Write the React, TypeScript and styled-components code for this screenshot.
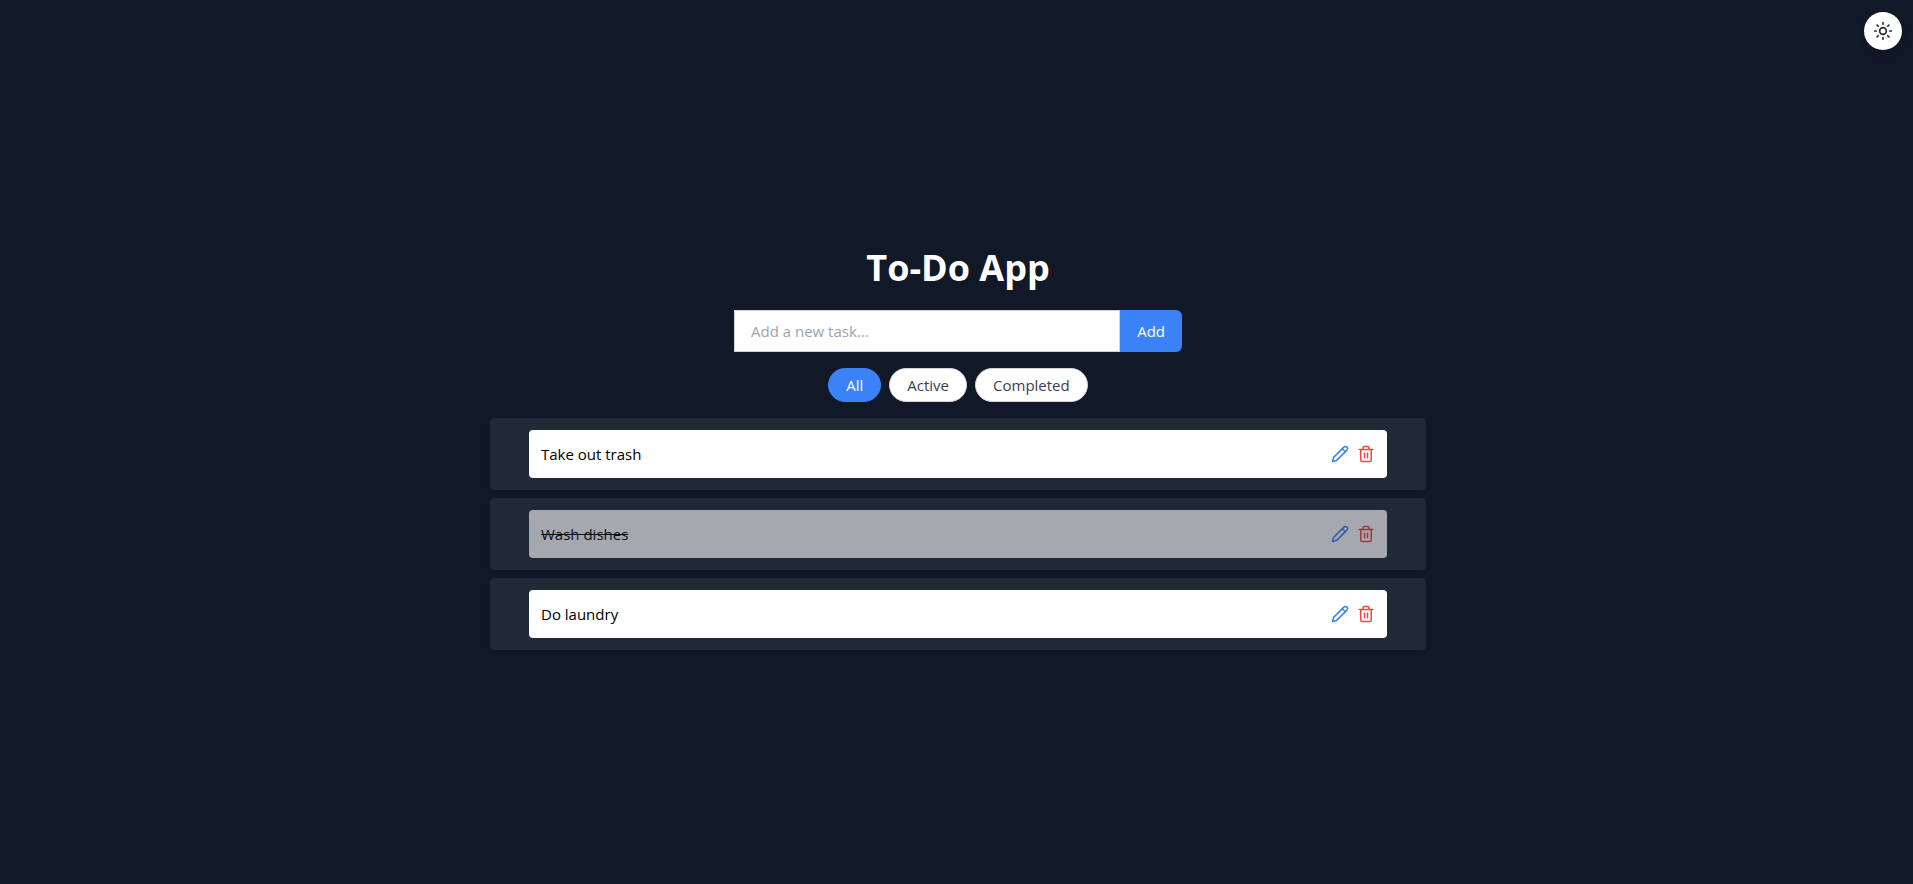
import React, { useState } from 'react';
import styled, { createGlobalStyle } from 'styled-components';
import { Pencil, Sun, Trash2 } from 'lucide-react';

const GlobalStyle = createGlobalStyle`
  *, *::before, *::after { box-sizing: border-box; }
  body {
    margin: 0;
    background: #111827;
    font-family: 'Segoe UI', 'Open Sans', 'Noto Sans', sans-serif;
    font-size: 15px;
    line-height: 24px;
  }
  button, input { font: inherit; margin: 0; }
  button { cursor: pointer; }
`;

const Page = styled.main`
  min-height: 100vh;
  display: flex;
  flex-direction: column;
  align-items: center;
  justify-content: center;
  padding: 26px 12px 12px 15px;
`;

const ThemeButton = styled.button`
  position: fixed;
  top: 12px;
  right: 11px;
  width: 38px;
  height: 38px;
  display: flex;
  align-items: center;
  justify-content: center;
  padding: 0;
  border: 0;
  border-radius: 50%;
  background: #ffffff;
  color: #1f2937;
  box-shadow: 0 4px 6px rgba(0, 0, 0, 0.1);
`;

const Title = styled.h1`
  margin: 0 0 22px;
  color: #ffffff;
  font-size: 36px;
  line-height: 40px;
  font-weight: 700;
`;

const AddForm = styled.form`
  display: flex;
  width: 100%;
  max-width: 448px;
  margin-bottom: 16px;
`;

const TaskInput = styled.input`
  flex: 1;
  min-width: 0;
  padding: 8px 16px;
  border: 1px solid #d1d5db;
  border-radius: 0;
  background: #ffffff;
  color: #111827;
  &::placeholder { color: #9ca3af; opacity: 1; }
`;

const AddButton = styled.button`
  padding: 8px 17px;
  border: 0;
  border-radius: 0 6px 6px 0;
  background: #3b82f6;
  color: #ffffff;
`;

const Filters = styled.div`
  display: flex;
  gap: 8px;
  margin-bottom: 16px;
`;

const FilterButton = styled.button<{ $active: boolean }>`
  padding: 4px 17px;
  border: 1px solid ${(p) => (p.$active ? '#3b82f6' : '#d1d5db')};
  border-radius: 17px;
  background: ${(p) => (p.$active ? '#3b82f6' : '#ffffff')};
  color: ${(p) => (p.$active ? '#ffffff' : '#374151')};
`;

const TaskList = styled.ul`
  display: flex;
  flex-direction: column;
  gap: 8px;
  width: 100%;
  max-width: 936px;
  margin: 0;
  padding: 0;
  list-style: none;
`;

const TaskRow = styled.li`
  padding: 12px 39px;
  border-radius: 4px;
  background: #1f2937;
  box-shadow: 0 1px 3px rgba(0, 0, 0, 0.1);
`;

const TaskCard = styled.div<{ $done: boolean }>`
  display: flex;
  align-items: center;
  gap: 8px;
  padding: 12px;
  border-radius: 4px;
  background: #ffffff;
  opacity: ${(p) => (p.$done ? 0.6 : 1)};
`;

const TaskText = styled.span<{ $done: boolean }>`
  flex: 1;
  color: #000000;
  text-decoration: ${(p) => (p.$done ? 'line-through' : 'none')};
`;

const IconButton = styled.button<{ $color: string }>`
  display: flex;
  padding: 0;
  border: 0;
  background: none;
  color: ${(p) => p.$color};
`;

const filters = ['All', 'Active', 'Completed'];

const initialTasks = [
  { id: 1, text: 'Take out trash', done: false },
  { id: 2, text: 'Wash dishes', done: true },
  { id: 3, text: 'Do laundry', done: false },
];

export default function App() {
  const [filter, setFilter] = useState('All');
  const [tasks, setTasks] = useState(initialTasks);
  const [draft, setDraft] = useState('');

  const addTask = (event: React.FormEvent) => {
    event.preventDefault();
    if (!draft.trim()) return;
    setTasks([...tasks, { id: Date.now(), text: draft.trim(), done: false }]);
    setDraft('');
  };

  const visible = tasks.filter(
    (task) => filter === 'All' || task.done === (filter === 'Completed'),
  );

  return (
    <>
      <GlobalStyle />
      <ThemeButton type="button" aria-label="Toggle theme">
        <Sun size={20} />
      </ThemeButton>
      <Page>
        <Title>To-Do App</Title>
        <AddForm onSubmit={addTask}>
          <TaskInput
            aria-label="New task"
            placeholder="Add a new task..."
            value={draft}
            onChange={(event) => setDraft(event.target.value)}
          />
          <AddButton type="submit">Add</AddButton>
        </AddForm>
        <Filters>
          {filters.map((name) => (
            <FilterButton
              key={name}
              type="button"
              $active={filter === name}
              aria-pressed={filter === name}
              onClick={() => setFilter(name)}
            >
              {name}
            </FilterButton>
          ))}
        </Filters>
        <TaskList>
          {visible.map((task) => (
            <TaskRow key={task.id}>
              <TaskCard $done={task.done}>
                <TaskText $done={task.done}>{task.text}</TaskText>
                <IconButton type="button" $color="#3b82f6" aria-label={`Edit ${task.text}`}>
                  <Pencil size={18} />
                </IconButton>
                <IconButton
                  type="button"
                  $color="#ef4444"
                  aria-label={`Delete ${task.text}`}
                  onClick={() => setTasks(tasks.filter((item) => item.id !== task.id))}
                >
                  <Trash2 size={18} />
                </IconButton>
              </TaskCard>
            </TaskRow>
          ))}
        </TaskList>
      </Page>
    </>
  );
}
